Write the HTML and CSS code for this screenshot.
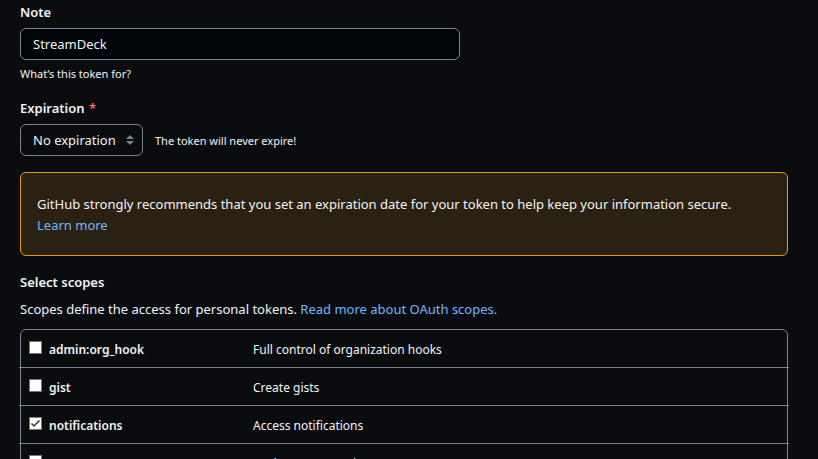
FILE: index.html
```html
<!DOCTYPE html>
<html lang="en">
<head>
<meta charset="utf-8">
<meta name="viewport" content="width=device-width, initial-scale=1">
<title>New personal access token</title>
<link rel="stylesheet" href="styles.css">
</head>
<body>
<form class="token-form">
  <div class="field">
    <label class="label" for="note">Note</label>
    <input class="text-input" id="note" type="text" value="StreamDeck" aria-describedby="note-help">
    <p class="hint" id="note-help">What’s this token for?</p>
  </div>
  <div class="field">
    <label class="label" for="expiration">Expiration <span class="required">*</span></label>
    <div class="expiration">
      <span class="select-wrap">
        <select class="select" id="expiration"><option>No expiration</option></select>
        <svg class="select-arrows" width="8" height="10" viewBox="0 0 8 10" aria-hidden="true"><path d="M4 0 8 4H0ZM0 6H8L4 10Z"/></svg>
      </span>
      <span class="hint">The token will never expire!</span>
    </div>
  </div>
  <div class="warning">
    <p>GitHub strongly recommends that you set an expiration date for your token to help keep your information secure. <a href="#">Learn more</a></p>
  </div>
  <h2 class="label">Select scopes</h2>
  <p class="intro">Scopes define the access for personal tokens. <a href="#">Read more about OAuth scopes.</a></p>
  <ul class="scopes">
    <li class="scope"><label class="scope-name"><input class="check" type="checkbox">admin:org_hook</label><span>Full control of organization hooks</span></li>
    <li class="scope"><label class="scope-name"><input class="check" type="checkbox">gist</label><span>Create gists</span></li>
    <li class="scope"><label class="scope-name"><input class="check" type="checkbox" checked>notifications</label><span>Access notifications</span></li>
    <li class="scope"><label class="scope-name"><input class="check" type="checkbox">user</label><span>Update ALL user data</span></li>
  </ul>
</form>
</body>
</html>
```
FILE: styles.css
```css
* {
  box-sizing: border-box;
}

html {
  height: 100%;
  overflow: hidden;
}

body {
  height: 100%;
  margin: 0;
  overflow: hidden;
  background: #0a0c10;
  color: #f0f3f6;
  font: 13px/21px "Segoe UI", "Noto Sans", sans-serif;
}

p {
  margin: 0;
}

a {
  color: #71b7ff;
  text-decoration: none;
  white-space: nowrap;
}

.token-form {
  padding: 2px 30px 0 20px;
}

.field {
  margin-bottom: 16px;
}

.label {
  display: block;
  margin: 0 0 5px;
  font-size: 13px;
  font-weight: 600;
  line-height: 21px;
}

.required {
  margin-left: 1px;
  color: #ff6a69;
}

.text-input,
.select {
  height: 32px;
  padding: 0 12px;
  border: 1px solid #7a828e;
  border-radius: 6px;
  color: #f0f3f6;
  font: inherit;
}

.text-input {
  display: block;
  width: 100%;
  max-width: 440px;
  background: #010409;
}

.hint {
  font-size: 11px;
  line-height: 17px;
}

.text-input + .hint {
  margin-top: 5px;
}

.expiration {
  display: flex;
  align-items: center;
  gap: 12px;
}

.select-wrap {
  position: relative;
  display: flex;
}

.select {
  padding-right: 26px;
  appearance: none;
  background: #0a0c10;
}

.select-arrows {
  position: absolute;
  top: 11px;
  right: 9px;
  fill: #7a828e;
  pointer-events: none;
}

.warning {
  margin-bottom: 16px;
  padding: 21px 16px 19px;
  border: 1px solid #e09b13;
  border-radius: 6px;
  background: #2b2113;
}

.intro {
  margin: 6px 0 9px;
}

.scopes {
  margin: 0;
  padding: 0;
  border: 1px solid #7a828e;
  border-radius: 6px;
  list-style: none;
  font-size: 12px;
}

.scope {
  display: grid;
  grid-template-columns: 224px 1fr;
  align-items: center;
  height: 38px;
  margin: 0 -2px;
  padding: 2px 10px 0;
  border-bottom: 1px solid #7a828e;
}

.scope:last-child {
  border-bottom-color: transparent;
}

.scope-name {
  display: flex;
  align-items: center;
  gap: 7px;
  font-weight: 600;
}

.check {
  width: 13px;
  height: 13px;
  margin: 0 0 4px;
  border: 1px solid #767676;
  appearance: none;
  background: #fff;
}

.check:checked {
  background: #fff url("data:image/svg+xml,%3Csvg xmlns='http://www.w3.org/2000/svg' viewBox='0 0 11 11'%3E%3Cpath d='M1.5 5.5 4 8 9.5 2.5' fill='none' stroke='%23333' stroke-width='1.5'/%3E%3C/svg%3E") center / 11px no-repeat;
}
```
